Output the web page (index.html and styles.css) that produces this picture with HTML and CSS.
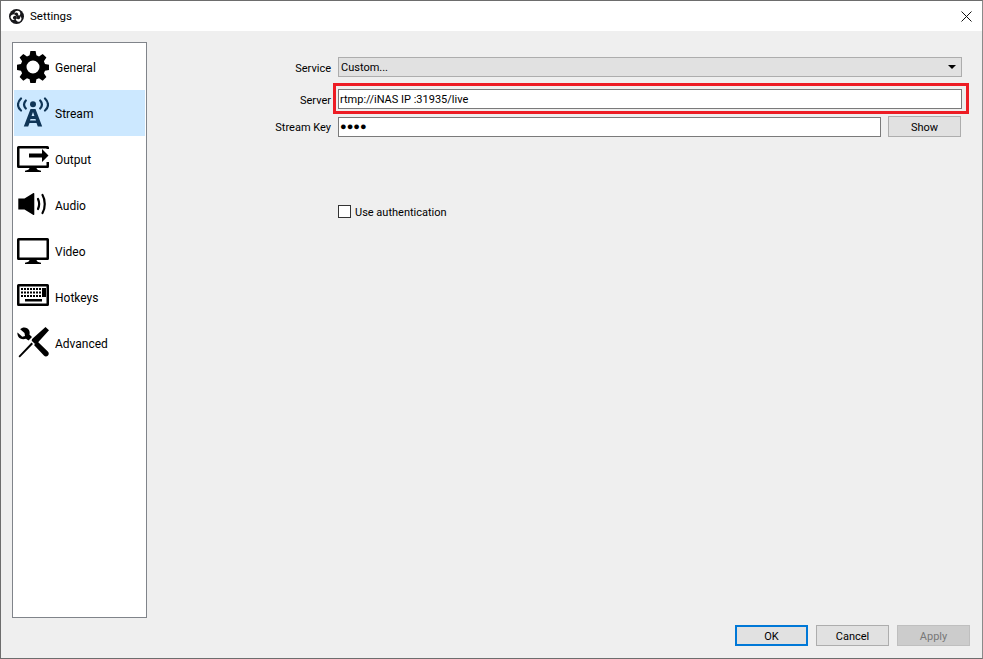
FILE: index.html
```html
<!DOCTYPE html>
<html lang="en">
<head>
<meta charset="utf-8">
<title>Settings</title>
<link rel="stylesheet" href="styles.css">
</head>
<body>
<div class="window">
  <header class="titlebar">
    <svg class="logo" viewBox="0 0 16 16" width="15" height="15">
      <circle cx="8" cy="8" r="8" fill="#17171b"/>
      <g><circle cx="9" cy="4.900" r="3" fill="#fff"/><circle cx="7.700" cy="5.900" r="2.100" fill="#17171b"/></g>
      <g transform="rotate(120 8 8)"><circle cx="9" cy="4.900" r="3" fill="#fff"/><circle cx="7.700" cy="5.900" r="2.100" fill="#17171b"/></g>
      <g transform="rotate(240 8 8)"><circle cx="9" cy="4.900" r="3" fill="#fff"/><circle cx="7.700" cy="5.900" r="2.100" fill="#17171b"/></g>
    </svg>
    <span class="title">Settings</span>
    <svg class="close" viewBox="0 0 11 11" width="11" height="11"><path d="M.5.5l10 10M10.500.5l-10 10" stroke="#111" stroke-width="1" fill="none"/></svg>
  </header>
  <div class="content">
    <div class="main">
      <nav class="sidebar">
        <div class="nav-item">
          <svg class="nav-icon" viewBox="0 0 32 32"><path fill-rule="evenodd" d="M13.400 0h5.200l.8 4.300 2.600 1.100 3.700-2.500 3.700 3.700-2.500 3.700 1.100 2.600 4.300.8v5.200l-4.300.8-1.100 2.600 2.500 3.700-3.700 3.700-3.700-2.500-2.600 1.100-.8 4.300h-5.200l-.8-4.300-2.600-1.100-3.700 2.500-3.700-3.700 2.500-3.700-1.100-2.600-4.300-.8v-5.200l4.300-.8 1.100-2.600-2.500-3.700 3.700-3.700 3.700 2.500 2.600-1.100zM16 9.500a6.500 6.500 0 1 0 0 13 6.500 6.500 0 0 0 0-13z" fill="#000"/></svg>
          <span class="nav-text">General</span>
        </div>
        <div class="nav-item active">
          <svg class="nav-icon" viewBox="0 0 32 32"><g fill="none" stroke="#0f3557" stroke-width="2.200" stroke-linecap="round"><path d="M4 1.500c-4 3.800-4 8.700 0 12M28 1.500c4 3.800 4 8.700 0 12M8.800 3.500c-2.200 2.500-2.200 5.500 0 8M23.200 3.500c2.200 2.500 2.200 5.500 0 8"/></g><circle cx="16" cy="7.300" r="3" fill="#0f3557"/><path fill="#0f3557" fill-rule="evenodd" d="M13.500 12h5l6.700 17.500h-4.400l-1.300-3.500h-7l-1.300 3.500H6.800zM14.600 19h2.800L16 15zM13.500 22l-.5 1.500h6l-.5-1.500z"/></svg>
          <span class="nav-text">Stream</span>
        </div>
        <div class="nav-item">
          <svg class="nav-icon" viewBox="0 0 32 32"><path fill="#000" d="M1.500 3h29A1.500 1.500 0 0 1 32 4.500V6h-2.500V5.500h-27v17h27V19H32v4.500a1.500 1.500 0 0 1-1.500 1.500H19.500c.3 1.500 1.500 2.300 4.500 2.700V29H8v-1.300c3-.4 4.200-1.200 4.500-2.700H1.500A1.500 1.500 0 0 1 0 23.500v-19A1.500 1.500 0 0 1 1.500 3z"/><path fill="#000" d="M12 10.500h13V6l6.500 6.500L25 19v-4.500H12z"/></svg>
          <span class="nav-text">Output</span>
        </div>
        <div class="nav-item">
          <svg class="nav-icon" viewBox="0 0 32 32"><path fill="#000" d="M1.300 9.500h6.200L16 4.200a.8.800 0 0 1 1.300.6v20.400a.8.800 0 0 1-1.300.6l-8.500-5.300H1.300z"/><path fill="none" stroke="#000" stroke-width="2.200" stroke-linecap="round" d="M21 10c1.400 3 1.400 7 0 10M25.500 6c3 5 3 13 0 18"/></svg>
          <span class="nav-text">Audio</span>
        </div>
        <div class="nav-item">
          <svg class="nav-icon" viewBox="0 0 32 32"><path fill="#000" fill-rule="evenodd" d="M1.500 3h29A1.500 1.500 0 0 1 32 4.500v19a1.500 1.500 0 0 1-1.500 1.500H19.500c.3 1.500 1.500 2.300 4.500 2.700V29H8v-1.300c3-.4 4.200-1.200 4.500-2.700H1.500A1.500 1.500 0 0 1 0 23.500v-19A1.500 1.500 0 0 1 1.500 3zM2.500 5.500v17h27v-17z"/></svg>
          <span class="nav-text">Video</span>
        </div>
        <div class="nav-item">
          <svg class="nav-icon" viewBox="0 0 32 32"><path fill="#000" fill-rule="evenodd" d="M1.500 3h29A1.500 1.500 0 0 1 32 4.500v19a1.500 1.500 0 0 1-1.500 1.500h-29A1.500 1.500 0 0 1 0 23.500v-19A1.500 1.500 0 0 1 1.500 3zM2.500 5.500v17h27v-17z"/><path stroke="#000" stroke-width="2" stroke-dasharray="2 1" fill="none" d="M4 8h20M4 11.500h20M4 15h20"/><path fill="#000" d="M8 18h17v2.500H8zM25 7h4v9h-4z"/></svg>
          <span class="nav-text">Hotkeys</span>
        </div>
        <div class="nav-item">
          <svg class="nav-icon" viewBox="0 0 32 32"><path fill="#000" d="M.5 5.500l4.800 4.300 2.700-.8-.5-3L3.200 2.200C6-.8 10.700.2 12.200 3.500c.6 1.400.6 2.800.2 4L15 10l-3.500 3.500L9 11.800c-3 1-6.500.2-7.800-2.300C.6 8.300.2 6.800.5 5.500zM17 18l3.500-3.500 10.300 10c1.400 1.400 1.200 3.200 0 4.200-1.200 1-2.800.9-3.900-.2z"/><path fill="#000" d="M28.500 0L32 3.300 20 16.500l-2 .6-3.300-3.300.4-1.900zM14.500 15.500l1.500 1.500L2.800 30.500 1.500 29.300z"/></svg>
          <span class="nav-text">Advanced</span>
        </div>
      </nav>
      <section class="form">
        <div class="row row-service">
          <label class="label">Service</label>
          <div class="combo">
            <span>Custom...</span>
            <span class="arrow"></span>
          </div>
        </div>
        <div class="row row-server">
          <label class="label">Server</label>
          <div class="field-wrap">
            <div class="field">rtmp://iNAS IP :31935/live</div>
            <div class="highlight"></div>
          </div>
        </div>
        <div class="row row-key">
          <label class="label">Stream Key</label>
          <div class="field field-key">●●●●</div>
          <button class="btn btn-show">Show</button>
        </div>
        <div class="row row-auth">
          <span class="label"></span>
          <span class="checkbox"></span>
          <span class="check-label">Use authentication</span>
        </div>
      </section>
    </div>
    <footer class="footer">
      <button class="btn btn-ok">OK</button>
      <button class="btn">Cancel</button>
      <button class="btn btn-disabled">Apply</button>
    </footer>
  </div>
</div>
</body>
</html>
```
FILE: styles.css
```css
* { box-sizing: border-box; }
html, body { margin: 0; height: 100%; }
body {
  font-family: "Roboto", "Open Sans", "Liberation Sans", sans-serif;
  font-size: 11px;
  color: #000;
  background: #efefef;
  overflow: hidden;
}
.window {
  height: 659px;
  display: flex;
  flex-direction: column;
  border: 1px solid #6d6d6d;
  border-right-color: #8a8a8a;
  background: #efefef;
}
.titlebar {
  height: 30px;
  flex: none;
  background: #fff;
  display: flex;
  align-items: center;
  padding: 0 10px 0 8px;
}
.logo { flex: none; }
.title { margin-left: 6px; font-size: 11.500px; }
.close { margin-left: auto; }
.content {
  flex: 1;
  display: flex;
  flex-direction: column;
  min-height: 0;
}
.main {
  flex: 1;
  display: flex;
  min-height: 0;
  padding: 11px 0 0 11px;
}
.sidebar {
  width: 135px;
  height: 576px;
  flex: none;
  background: #fff;
  border: 1px solid #80848a;
  padding: 1px 1px 0 1px;
  font-size: 12px;
}
.nav-item {
  height: 46px;
  display: flex;
  align-items: center;
  gap: 6px;
  padding-left: 3px;
}
.nav-text { padding-top: 1px; }
.nav-item.active { background: #cce8ff; }
.nav-icon { width: 32px; height: 32px; flex: none; }
.form {
  flex: 1;
  padding: 15px 20px 0 0;
  display: flex;
  flex-direction: column;
}
.row {
  display: flex;
  align-items: center;
}
.label {
  width: 191px;
  flex: none;
  text-align: right;
  padding: 2px 7px 0 0;
}
.combo {
  flex: 1;
  height: 20px;
  background: #e1e1e1;
  border: 1px solid #adadad;
  padding: 0 5px 0 2px;
  display: flex;
  align-items: center;
  justify-content: space-between;
}
.arrow {
  width: 0;
  height: 0;
  border-left: 4px solid transparent;
  border-right: 4px solid transparent;
  border-top: 4px solid #000;
}
.row-server { margin-top: 12px; }
.field-wrap { flex: 1; position: relative; }
.field {
  height: 20px;
  background: #fff;
  border: 1px solid #7a7a7a;
  padding: 0 1px;
  line-height: 20px;
  white-space: nowrap;
}
.highlight {
  position: absolute;
  left: -5px;
  top: -6px;
  right: -7px;
  bottom: -5px;
  border: 3px solid #ed1c24;
  pointer-events: none;
}
.row-key { margin-top: 7px; }
.field-key { width: 543px; flex: none; font-size: 11px; line-height: 18px; }
.btn {
  width: 73px;
  height: 21px;
  padding: 1px 0 0;
  font: inherit;
  color: #000;
  background: #e1e1e1;
  border: 1px solid #adadad;
}
.btn-show { margin-left: 7px; }
.row-auth { margin-top: 67px; }
.checkbox {
  width: 13px;
  height: 13px;
  background: #fff;
  border: 1px solid #333;
  flex: none;
}
.check-label { margin: 2px 0 0 4px; }
.footer {
  flex: none;
  height: 41px;
  padding: 0 12px 12px 0;
  display: flex;
  justify-content: flex-end;
  align-items: flex-end;
  gap: 8px;
}
.btn-ok { border: 2px solid #0078d7; }
.btn-disabled { background: #cccccc; border-color: #bfbfbf; color: #787878; }
```
